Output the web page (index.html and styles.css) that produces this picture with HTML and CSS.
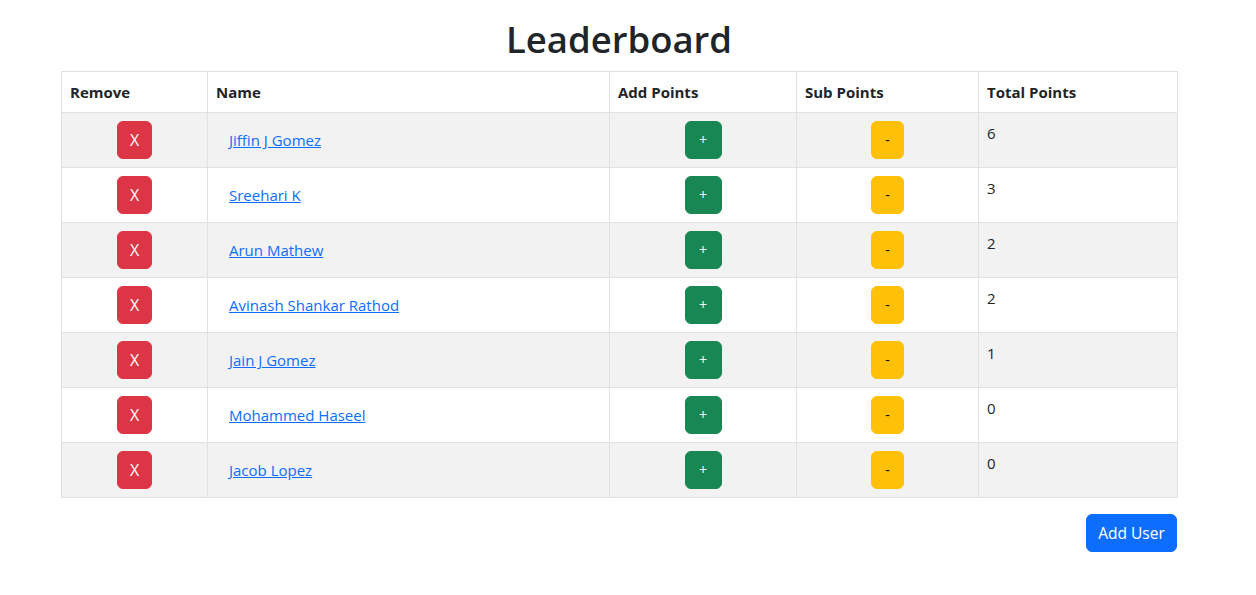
FILE: index.html
```html
<!DOCTYPE html>
<html lang="en">
<head>
<meta charset="utf-8">
<title>Leaderboard</title>
<link rel="stylesheet" href="styles.css">
</head>
<body>
<div class="container">
  <h1 class="title">Leaderboard</h1>
  <table class="board">
    <colgroup>
      <col class="c-remove">
      <col class="c-name">
      <col class="c-add">
      <col class="c-sub">
      <col class="c-total">
    </colgroup>
    <thead>
      <tr><th>Remove</th><th>Name</th><th>Add Points</th><th>Sub Points</th><th>Total Points</th></tr>
    </thead>
    <tbody>
      <tr><td class="center"><button class="btn btn-x">X</button></td><td><a class="name" href="#">Jiffin J Gomez</a></td><td class="center"><button class="btn btn-plus">+</button></td><td class="center"><button class="btn btn-minus">-</button></td><td class="total">6</td></tr>
      <tr><td class="center"><button class="btn btn-x">X</button></td><td><a class="name" href="#">Sreehari K</a></td><td class="center"><button class="btn btn-plus">+</button></td><td class="center"><button class="btn btn-minus">-</button></td><td class="total">3</td></tr>
      <tr><td class="center"><button class="btn btn-x">X</button></td><td><a class="name" href="#">Arun Mathew</a></td><td class="center"><button class="btn btn-plus">+</button></td><td class="center"><button class="btn btn-minus">-</button></td><td class="total">2</td></tr>
      <tr><td class="center"><button class="btn btn-x">X</button></td><td><a class="name" href="#">Avinash Shankar Rathod</a></td><td class="center"><button class="btn btn-plus">+</button></td><td class="center"><button class="btn btn-minus">-</button></td><td class="total">2</td></tr>
      <tr><td class="center"><button class="btn btn-x">X</button></td><td><a class="name" href="#">Jain J Gomez</a></td><td class="center"><button class="btn btn-plus">+</button></td><td class="center"><button class="btn btn-minus">-</button></td><td class="total">1</td></tr>
      <tr><td class="center"><button class="btn btn-x">X</button></td><td><a class="name" href="#">Mohammed Haseel</a></td><td class="center"><button class="btn btn-plus">+</button></td><td class="center"><button class="btn btn-minus">-</button></td><td class="total">0</td></tr>
      <tr><td class="center"><button class="btn btn-x">X</button></td><td><a class="name" href="#">Jacob Lopez</a></td><td class="center"><button class="btn btn-plus">+</button></td><td class="center"><button class="btn btn-minus">-</button></td><td class="total">0</td></tr>
    </tbody>
  </table>
  <div class="actions">
    <button class="btn btn-add">Add User</button>
  </div>
</div>
</body>
</html>
```
FILE: styles.css
```css
* { box-sizing: border-box; }
html, body {
  margin: 0;
  background: #fff;
  color: #212529;
  font-family: "Open Sans", "Noto Sans", sans-serif;
  font-size: 16px;
  line-height: 1.5;
}
.container {
  width: 1116px;
  margin-left: 61px;
  padding-top: 15px;
}
.title {
  margin: 0 0 7px 0;
  text-align: center;
  font-size: 36.5px;
  font-weight: 600;
  line-height: 49px;
  color: #212529;
}
.board {
  width: 1116px;
  border-collapse: collapse;
  table-layout: fixed;
  margin-bottom: 16px;
}
.c-remove { width: 146px; }
.c-name { width: 402px; }
.c-add { width: 187px; }
.c-sub { width: 182px; }
.c-total { width: 199px; }
.board th, .board td {
  border: 1px solid #dee2e6;
  padding: 8px;
  vertical-align: top;
  text-align: left;
}
.board th {
  font-weight: 700;
  font-size: 15px;
  line-height: 24px;
  vertical-align: bottom;
}
.board tbody tr:nth-child(odd) td { background: #f2f2f2; }
.board td.center { text-align: center; }
.board td { line-height: 24px; }
.total { font-size: 15px; }
.btn {
  display: inline-block;
  height: 38px;
  border: 1px solid transparent;
  border-radius: 6px;
  font-family: inherit;
  font-size: 16px;
  line-height: 24px;
  padding: 6px 0;
  text-align: center;
  cursor: pointer;
  vertical-align: middle;
}
.btn-x { width: 35px; background: #dc3545; border-color: #dc3545; color: #fff; }
.btn-plus { width: 37px; background: #198754; border-color: #198754; color: #fff; font-size: 14px; }
.btn-minus { width: 33px; background: #ffc107; border-color: #ffc107; color: #000; font-size: 14px; }
.name {
  display: inline-block;
  padding: 7px 12px 7px 13px;
  color: #0d6efd;
  text-decoration: underline;
  font-size: 15px;
  line-height: 24px;
}
.actions {
  display: flex;
  justify-content: flex-end;
}
.btn-add {
  width: 91px;
  background: #0d6efd;
  border-color: #0d6efd;
  color: #fff;
  font-size: 15.5px;
}
```
